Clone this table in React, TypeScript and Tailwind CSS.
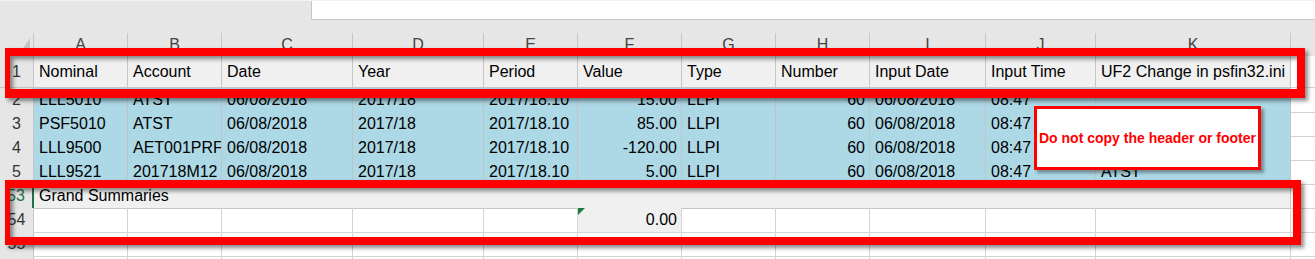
import React from "react";

const GRID = "grid grid-cols-[34px_94px_94px_131px_131px_94px_104px_94px_94px_116px_110px_195px_1fr]";

const letters = ["A", "B", "C", "D", "E", "F", "G", "H", "I", "J", "K"];
const headers = ["Nominal", "Account", "Date", "Year", "Period", "Value", "Type", "Number", "Input Date", "Input Time", "UF2 Change in psfin32.ini"];
const rightCols = [5, 7];

// K3/K4 sit under the note box, so they are left empty
const rows = [
    { n: "2", cells: ["LLL5010", "ATST", "06/08/2018", "2017/18", "2017/18.10", "15.00", "LLPI", "60", "06/08/2018", "08:47", ""] },
    { n: "3", cells: ["PSF5010", "ATST", "06/08/2018", "2017/18", "2017/18.10", "85.00", "LLPI", "60", "06/08/2018", "08:47", ""] },
    { n: "4", cells: ["LLL9500", "AET001PRF", "06/08/2018", "2017/18", "2017/18.10", "-120.00", "LLPI", "60", "06/08/2018", "08:47", ""] },
    { n: "5", cells: ["LLL9521", "201718M12", "06/08/2018", "2017/18", "2017/18.10", "5.00", "LLPI", "60", "06/08/2018", "08:47", "ATST"] },
];

function RowNum({ n, green }: { n: string; green?: boolean }) {
    return (
        <div
            className={
                green
                    ? "bg-[#e6e6e6] border-b border-[#c6c6c6] border-r-2 border-r-[#217346] text-[#217346] flex items-center justify-center"
                    : "bg-[#e6e6e6] border-b border-r border-[#c6c6c6] text-[#333] flex items-center justify-center"
            }
        >
            {n}
        </div>
    );
}

function WhiteRow({ n, value }: { n: string; value?: boolean }) {
    return (
        <div className={`${GRID} h-6 leading-6`}>
            <RowNum n={n} />
            {letters.map((l, i) =>
                value && i === 5 ? (
                    <div key={l} className="relative bg-[#f0f0f0] border-r border-b border-[#d4d4d4] px-[4px] text-right">
                        <svg className="absolute left-0 top-0" width="7" height="7" viewBox="0 0 7 7">
                            <polygon points="0,0 7,0 0,7" fill="#1d7a3a" />
                        </svg>
                        0.00
                    </div>
                ) : (
                    <div key={l} className="border-r border-b border-[#d4d4d4]" />
                )
            )}
            <div className="border-b border-[#d4d4d4]" />
        </div>
    );
}

export default function App() {
    return (
        <div className="relative w-[1315px] h-[259px] overflow-hidden bg-white text-[16px] text-black font-['Liberation_Sans',Arial,sans-serif]">
            {/* title / formula bar strip */}
            <div className="flex h-[20px] bg-[#e6e6e6] border-t border-[#f2f2f2]">
                <div className="w-[311px]" />
                <div className="flex-1 bg-white border-l border-b border-[#c6c6c6]" />
            </div>
            <div className="h-[13px] bg-[#e6e6e6]" />

            {/* column letters */}
            <div className={`${GRID} h-[23px] bg-[#e6e6e6] text-[#444] leading-[23px]`}>
                <div className="flex items-end justify-end pr-[3px] border-r border-[#c6c6c6]">
                    <svg width="12" height="20" viewBox="0 0 12 20">
                        <polygon points="12,2 12,20 0,20" fill="#c4c4c4" />
                    </svg>
                </div>
                {letters.map((l) => (
                    <div key={l} className="text-center border-r border-[#c6c6c6]">{l}</div>
                ))}
                <div />
            </div>

            {/* row 1 headers */}
            <div className={`${GRID} h-[32px] leading-6`}>
                <div className="bg-[#e6e6e6] border-b border-r border-[#c6c6c6] text-[#333] flex items-end justify-center pb-[3px]">1</div>
                {headers.map((h) => (
                    <div key={h} className="bg-[#f0f0f0] border-r border-b border-[#c6c6c6] flex items-end pb-[3px] px-[5px] whitespace-nowrap overflow-hidden">
                        {h}
                    </div>
                ))}
                <div className="border-b border-[#d4d4d4]" />
            </div>

            {/* data rows */}
            {rows.map((r) => (
                <div key={r.n} className={`${GRID} h-6 leading-6`}>
                    <RowNum n={r.n} />
                    {r.cells.map((c, i) => (
                        <div
                            key={i}
                            className={
                                rightCols.includes(i)
                                    ? "bg-[#add8e6] border-r border-b border-[#c0c4c6] px-[4px] text-right whitespace-nowrap overflow-hidden"
                                    : "bg-[#add8e6] border-r border-b border-[#c0c4c6] px-[5px] whitespace-nowrap overflow-hidden"
                            }
                        >
                            {c}
                        </div>
                    ))}
                    <div className="border-b border-[#d4d4d4]" />
                </div>
            ))}

            {/* grand summaries */}
            <div className={`${GRID} h-6 leading-6`}>
                <RowNum n="53" green />
                <div className="col-span-11 bg-[#f0f0f0] border-r border-b border-[#c6c6c6] px-[5px]">Grand Summaries</div>
                <div className="border-b border-[#d4d4d4]" />
            </div>
            <WhiteRow n="54" value />
            <WhiteRow n="55" />
            <WhiteRow n="" />

            {/* annotations */}
            <div className="absolute left-[5px] top-[48px] w-[1300px] h-[50px] border-t-8 border-b-[9px] border-r-8 border-l-[5px] border-[#ff0000] shadow-[3px_3px_4px_rgba(0,0,0,0.45),inset_3px_3px_4px_rgba(0,0,0,0.45)]" />
            <div className="absolute left-[5px] top-[180px] w-[1296px] h-[65px] border-t-8 border-b-8 border-r-8 border-l-[5px] border-[#ff0000] shadow-[3px_3px_4px_rgba(0,0,0,0.45),inset_3px_3px_4px_rgba(0,0,0,0.45)]" />
            <div className="absolute left-[1034px] top-[106px] w-[227px] h-[64px] bg-white border-[3px] border-[#ff0000] shadow-[3px_3px_3px_rgba(0,0,0,0.35)] flex items-center justify-center">
                <span className="text-[14px] font-bold text-[#ff0000] whitespace-nowrap">Do not copy the header or footer</span>
            </div>
        </div>
    );
}
